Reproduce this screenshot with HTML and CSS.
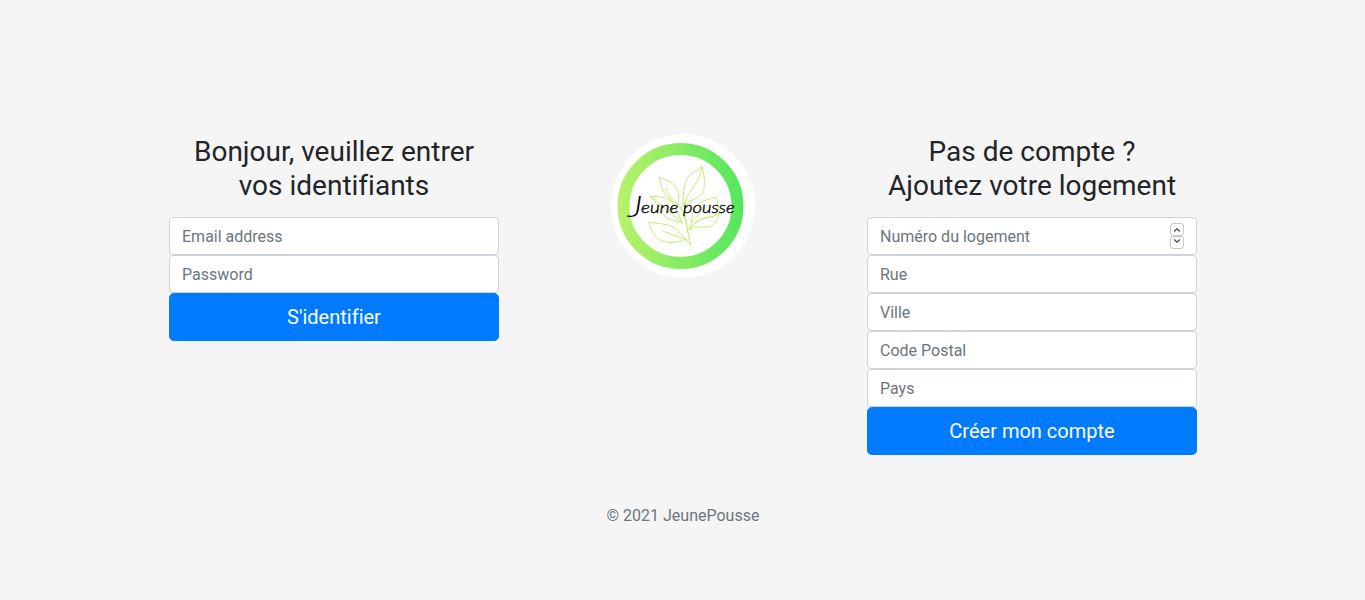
FILE: index.html
```html
<!DOCTYPE html>
<html lang="fr">
<head>
<meta charset="utf-8">
<title>Jeune Pousse</title>
<link rel="stylesheet" href="styles.css">
</head>
<body>
<main class="columns">
  <form class="form">
    <h1 class="title">Bonjour, veuillez entrer<br>vos identifiants</h1>
    <input class="field" type="email" placeholder="Email address">
    <input class="field" type="password" placeholder="Password">
    <button class="submit" type="button">S'identifier</button>
  </form>
  <svg class="logo" viewBox="18 12 432 432" role="img" aria-label="Jeune pousse">
    <defs>
      <linearGradient id="ring" gradientUnits="userSpaceOnUse" x1="38" y1="228" x2="415" y2="228">
        <stop offset="0" stop-color="#b9f26a"/>
        <stop offset="1" stop-color="#54e65d"/>
      </linearGradient>
    </defs>
    <circle cx="234" cy="228" r="216" fill="#fff"/>
    <circle cx="226.500" cy="228" r="171" fill="none" stroke="url(#ring)" stroke-width="36"/>
    <g class="leaves">
      <path d="M235 229C233 200 235 165 249 143C262 125 276 124 291 109C298 132 301 164 295 184C286 208 253 206 237 229"/>
      <path d="M291 109C286 142 272 164 253 190C246 201 240 213 237 228"/>
      <path d="M219 222C184 211 170 182 163 141C183 152 207 158 217 177C224 192 222 207 219 222Z"/>
      <path d="M219 222L233 243M183 174C186 190 198 207 219 222"/>
      <path d="M231 277C197 275 168 257 158 229C153 216 145 208 135 199C163 199 187 202 202 219C216 234 220 254 231 277Z"/>
      <path d="M135 199C158 213 178 235 199 251L231 277"/>
      <path d="M238 329C213 342 174 341 154 322C140 308 139 289 130 277C158 281 193 281 212 296C225 306 229 320 244 329Z"/>
      <path d="M174 303C194 311 222 320 243 330"/>
      <path d="M260 273C261 242 273 222 297 212C313 204 321 208 334 202C342 225 342 247 327 259C311 262 281 262 260 289"/>
      <path d="M310 222C300 239 290 247 278 256C266 266 258 277 252 298"/>
      <path d="M254 299C265 281 286 265 303 263C321 262 329 257 343 250C337 271 329 289 307 291C288 293 270 286 254 299"/>
      <path d="M226 234C245 257 243 290 258 347C251 337 244 332 239 325M239 235C237 260 247 285 251 319"/>
    </g>
    <text class="wordmark wordmark-initial" x="68" y="262" textLength="44" lengthAdjust="spacingAndGlyphs">J</text>
    <text class="wordmark" x="108" y="250" textLength="112" lengthAdjust="spacingAndGlyphs">eune</text>
    <text class="wordmark" x="234" y="250" textLength="155" lengthAdjust="spacingAndGlyphs">pousse</text>
  </svg>
  <form class="form">
    <h1 class="title">Pas de compte ?<br>Ajoutez votre logement</h1>
    <div class="number">
      <input class="field" type="number" placeholder="Numéro du logement">
      <div class="stepper">
        <span class="step"><svg class="chevron" viewBox="0 0 8 6"><path d="M1.200 4.500 4 1.800 6.800 4.500"/></svg></span>
        <span class="step step-down"><svg class="chevron" viewBox="0 0 8 6"><path d="M1.200 1.500 4 4.200 6.800 1.500"/></svg></span>
      </div>
    </div>
    <input class="field" type="text" placeholder="Rue">
    <input class="field" type="text" placeholder="Ville">
    <input class="field" type="text" placeholder="Code Postal">
    <input class="field" type="text" placeholder="Pays">
    <button class="submit" type="button">Créer mon compte</button>
  </form>
</main>
<footer class="footer">© 2021 JeunePousse</footer>
</body>
</html>
```
FILE: styles.css
```css
* { box-sizing: border-box; }
body {
  margin: 0;
  padding: 134px 0 0 1px;
  min-height: 600px;
  background: #f5f5f5;
  color: #212529;
  font: 16px/1.5 Roboto, sans-serif;
}
.columns {
  display: flex;
  justify-content: space-between;
  align-items: flex-start;
  width: 1028px;
  margin: 0 auto;
}
.form { width: 330px; }
.title {
  margin: 0 0 15px;
  padding-top: 1px;
  font-size: 28px;
  font-weight: 400;
  line-height: 1.2;
  text-align: center;
  font-variant-ligatures: none;
}
.field {
  display: block;
  width: 100%;
  height: 38px;
  margin: 0;
  padding: 6px 12px;
  border: 1px solid #ced4da;
  border-radius: 4px;
  background: #fff;
  color: #495057;
  font: inherit;
  appearance: none;
}
.field::placeholder { color: #6c757d; opacity: 1; }
.field::-webkit-inner-spin-button { appearance: none; }
.submit {
  display: block;
  width: 100%;
  height: 48px;
  padding: 8px 16px;
  border: 1px solid #007bff;
  border-radius: 4.8px;
  background: #007bff;
  color: #fff;
  font: 20px/1.5 Roboto, sans-serif;
  font-variant-ligatures: none;
}
.number { position: relative; }
.stepper {
  position: absolute;
  top: 6px;
  right: 13px;
  width: 14px;
}
.step {
  display: flex;
  align-items: center;
  justify-content: center;
  height: 13px;
  border: 1px solid #c8c8c8;
  border-radius: 3px;
  background: #fff;
}
.step-down { padding-bottom: 3px; }
.chevron {
  width: 8px;
  height: 6px;
  fill: none;
  stroke: #444;
  stroke-width: 1.3;
}
.logo { width: 144px; height: 144px; }
.leaves {
  fill: none;
  stroke: #c3ef73;
  stroke-width: 3;
  stroke-linejoin: round;
  stroke-linecap: round;
}
.wordmark {
  fill: #080808;
  stroke: #080808;
  stroke-width: 1.2;
  font: italic 300 48px Lato, cursive;
}
.wordmark-initial { font-size: 90px; stroke-width: 0; }
.footer {
  margin-top: 49px;
  color: #6c757d;
  text-align: center;
}
```
